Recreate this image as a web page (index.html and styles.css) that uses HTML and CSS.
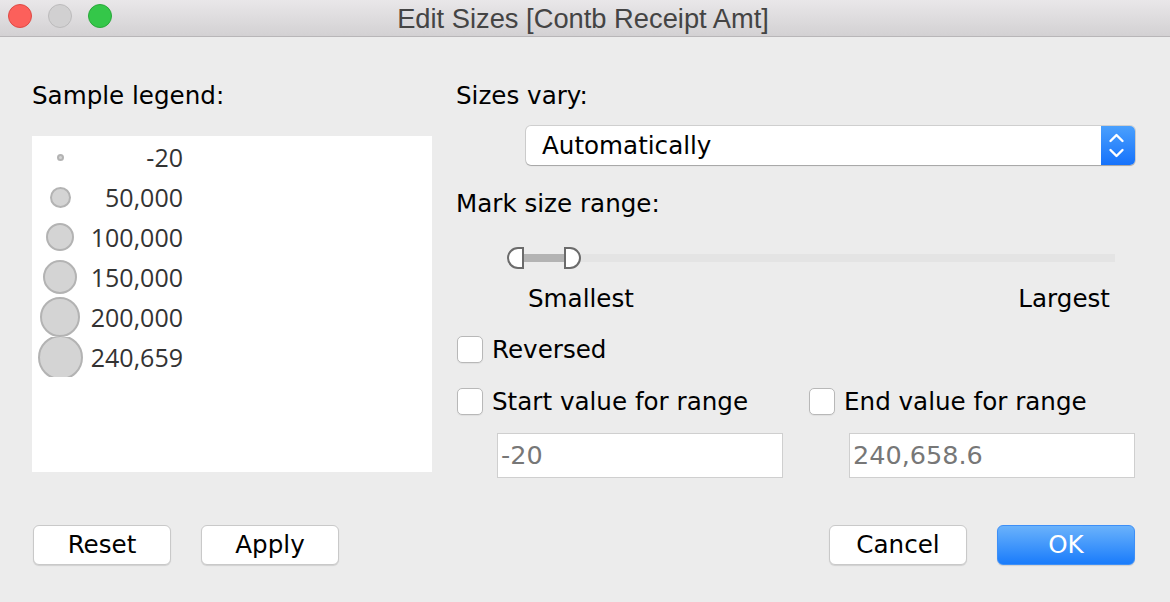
FILE: index.html
```html
<!DOCTYPE html>
<html>
<head>
<meta charset="utf-8">
<link rel="stylesheet" href="styles.css">
</head>
<body>
<div class="window">
  <div class="titlebar">
    <div class="lights">
      <span class="light red"></span>
      <span class="light gray"></span>
      <span class="light green"></span>
    </div>
    <div class="title">Edit Sizes [Contb Receipt Amt]</div>
    <div></div>
  </div>
  <div class="content">
    <div class="main">
      <div class="left">
        <div class="label">Sample legend:</div>
        <div class="legend">
          <div class="lrow"><div class="dotcell"><span class="dot" style="width:7px;height:7px"></span></div><div class="val">-20</div></div>
          <div class="lrow"><div class="dotcell"><span class="dot" style="width:21px;height:21px"></span></div><div class="val">50,000</div></div>
          <div class="lrow"><div class="dotcell"><span class="dot" style="width:28px;height:28px"></span></div><div class="val">100,000</div></div>
          <div class="lrow"><div class="dotcell"><span class="dot" style="width:34px;height:34px"></span></div><div class="val">150,000</div></div>
          <div class="lrow"><div class="dotcell"><span class="dot" style="width:40px;height:40px"></span></div><div class="val">200,000</div></div>
          <div class="lrow"><div class="dotcell"><span class="dot" style="width:45px;height:45px"></span></div><div class="val">240,659</div></div>
        </div>
      </div>
      <div class="right">
        <div class="label">Sizes vary:</div>
        <div class="select">
          <div class="select-text">Automatically</div>
          <div class="stepper">
            <svg width="34" height="40" viewBox="0 0 34 40">
              <polyline points="9.5,15 15.5,9 21.5,15" fill="none" stroke="#fff" stroke-width="2.4" stroke-linecap="round" stroke-linejoin="round"/>
              <polyline points="9.5,24 15.5,30 21.5,24" fill="none" stroke="#fff" stroke-width="2.4" stroke-linecap="round" stroke-linejoin="round"/>
            </svg>
          </div>
        </div>
        <div class="label label-range">Mark size range:</div>
        <div class="slider">
          <div class="track"></div>
          <div class="fill"></div>
          <span class="handle handle-l"></span>
          <span class="handle handle-r"></span>
        </div>
        <div class="range-labels"><span>Smallest</span><span>Largest</span></div>
        <div class="check check-rev"><span class="box"></span><span>Reversed</span></div>
        <div class="bounds">
          <div class="bound">
            <div class="check"><span class="box"></span><span>Start value for range</span></div>
            <div class="input">-20</div>
          </div>
          <div class="bound">
            <div class="check"><span class="box"></span><span>End value for range</span></div>
            <div class="input">240,658.6</div>
          </div>
        </div>
      </div>
    </div>
    <div class="footer">
      <div class="btns">
        <div class="btn">Reset</div>
        <div class="btn">Apply</div>
      </div>
      <div class="btns">
        <div class="btn">Cancel</div>
        <div class="btn btn-primary">OK</div>
      </div>
    </div>
  </div>
</div>
</body>
</html>
```

FILE: styles.css
```css
html, body {
  margin: 0;
  padding: 0;
}
body {
  width: 1170px;
  height: 602px;
  overflow: hidden;
  background: #ececec;
  font-family: "DejaVu Sans", sans-serif;
  font-size: 24.6px;
  color: #000;
}
.window {
  width: 1170px;
  height: 602px;
}
.titlebar {
  height: 36px;
  border-bottom: 1px solid #b8b6b8;
  background: linear-gradient(#e9e7e9, #d3d1d3);
  display: grid;
  grid-template-columns: 1fr auto 1fr;
  align-items: center;
}
.lights {
  display: flex;
  gap: 16px;
  padding-left: 8px;
  align-self: start;
  padding-top: 4px;
}
.light {
  width: 24px;
  height: 24px;
  border-radius: 50%;
  box-sizing: border-box;
}
.red { background: #fc605b; border: 1px solid #de4a45; }
.gray { background: #d1d0d1; border: 1px solid #bcbbbc; }
.green { background: #34c749; border: 1px solid #29a83a; }
.title {
  font-family: "Liberation Sans", Arial, sans-serif;
  font-size: 27.3px;
  color: #444;
  padding-top: 1px;
  padding-right: 4px;
}
.content {
  padding: 0 35px 0 32px;
}
.main {
  display: flex;
  gap: 24px;
  height: 441px;
}
.left {
  width: 400px;
  padding-top: 43px;
}
.right {
  flex: 1;
  padding-top: 43px;
}
.label {
  height: 32px;
  line-height: 32px;
}
.legend {
  margin-top: 24px;
  height: 336px;
  background: #fff;
  padding-top: 1px;
  box-sizing: border-box;
}
.lrow {
  height: 40px;
  display: flex;
  align-items: center;
  overflow: hidden;
}
.dotcell {
  width: 56px;
  height: 40px;
  display: flex;
  align-items: center;
  justify-content: center;
}
.dot {
  flex: none;
  border-radius: 50%;
  background: #d4d4d4;
  border: 2.5px solid #b3b3b3;
  box-sizing: border-box;
}
.val {
  width: 95px;
  text-align: right;
  font-family: "Open Sans", sans-serif;
  font-size: 25px;
  color: #333;
}
.select {
  margin-top: 14px;
  margin-left: 70px;
  height: 39px;
  display: flex;
  background: #fff;
  border-radius: 5px;
  box-shadow: 0 0 0 1px rgba(0,0,0,0.12), 0 1px 1px rgba(0,0,0,0.2);
}
.select-text {
  flex: 1;
  padding-left: 16px;
  line-height: 39px;
}
.stepper {
  width: 34px;
  border-radius: 0 5px 5px 0;
  background: linear-gradient(#4aa0fd, #1672fb);
  overflow: hidden;
}
.stepper svg { display: block; }
.label-range {
  margin-top: 23px;
}
.slider {
  position: relative;
  margin-top: 26px;
  height: 24px;
  margin-left: 51px;
  margin-right: 20px;
}
.track {
  position: absolute;
  left: 3px;
  right: 0;
  top: 8px;
  height: 8px;
  background: #e4e4e4;
}
.fill {
  position: absolute;
  left: 10px;
  width: 62px;
  top: 8px;
  height: 8px;
  background: #b3b3b3;
}
.handle {
  position: absolute;
  top: 1px;
  width: 17px;
  height: 22px;
  box-sizing: border-box;
  border: 2.5px solid #6b6b6b;
  background: #fff;
}
.handle-l {
  left: 0;
  border-radius: 11px 0 0 11px;
}
.handle-r {
  left: 57px;
  border-radius: 0 11px 11px 0;
}
.range-labels {
  margin-top: 14px;
  height: 30px;
  line-height: 30px;
  display: flex;
  justify-content: space-between;
  padding-left: 72px;
  padding-right: 25px;
}
.check {
  display: flex;
  align-items: center;
  height: 30px;
}
.check-rev {
  margin-top: 20px;
}
.box {
  width: 26px;
  height: 27px;
  box-sizing: border-box;
  margin-left: 1px;
  margin-right: 9px;
  background: #fff;
  border: 1px solid #b8b8b8;
  border-radius: 5px;
  box-shadow: 0 1px 1px rgba(0,0,0,0.06);
}
.bounds {
  margin-top: 22px;
  display: grid;
  grid-template-columns: 327px 327px;
  column-gap: 25px;
}
.input {
  margin-top: 17px;
  margin-left: 41px;
  height: 45px;
  box-sizing: border-box;
  border: 1px solid #cfcfcf;
  background: #fff;
  color: #777;
  font-size: 25.5px;
  line-height: 43px;
  padding-left: 3px;
}
.footer {
  margin-top: 47px;
  display: flex;
  justify-content: space-between;
  padding-left: 1px;
}
.btns {
  display: flex;
  gap: 30px;
}
.btn {
  width: 138px;
  height: 40px;
  box-sizing: border-box;
  background: #fff;
  border: 1px solid #c9c9c9;
  border-radius: 6px;
  box-shadow: 0 1px 1px rgba(0,0,0,0.12);
  text-align: center;
  line-height: 38px;
}
.btn-primary {
  background: linear-gradient(#6ab2fb, #1a7cfb);
  border-color: #3d8ff7;
  color: #fff;
}
```
